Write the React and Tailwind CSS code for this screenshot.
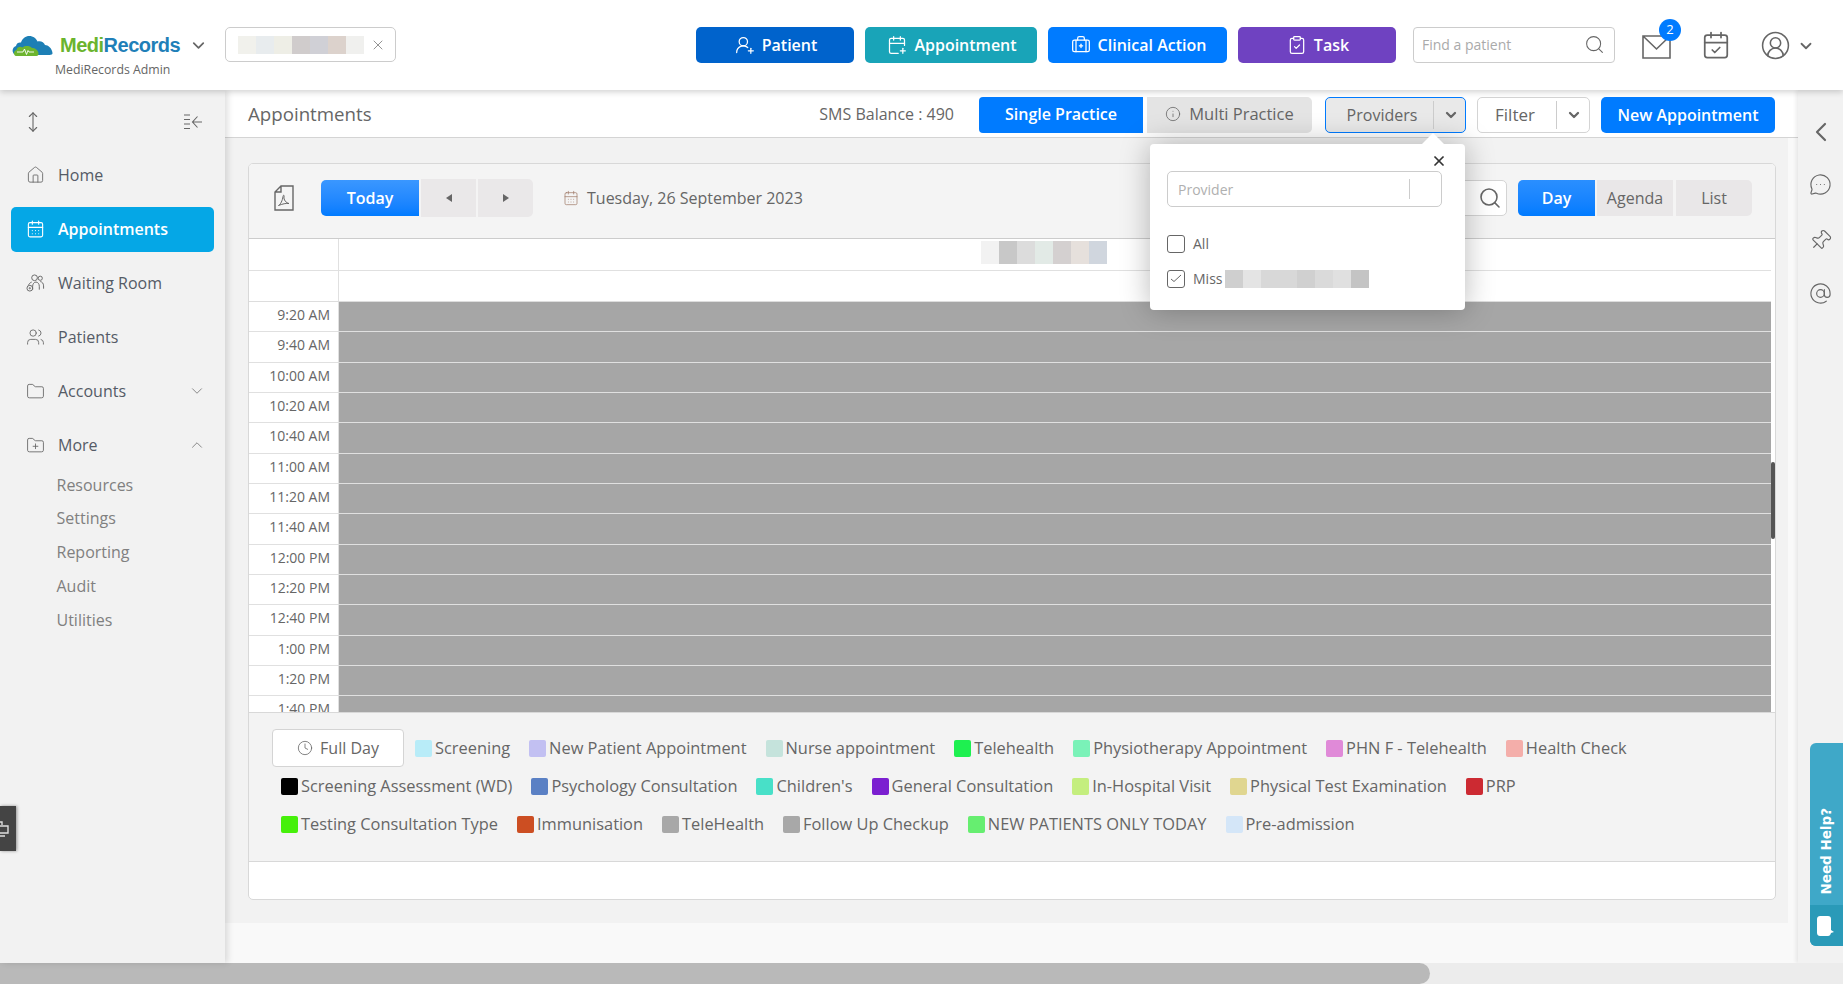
import * as React from "react";
import {
  AtSign, BriefcaseMedical, CalendarCheck, CalendarDays, CalendarPlus, ChevronDown, ChevronLeft, ChevronUp,
  CircleUserRound, ClipboardCheck, Clock, Folder, FolderPlus, Home, Info, MessageCircleMore, MoveVertical,
  Pin, Search, UserRoundPlus, Users, X,
} from "lucide-react";

const legendRows = [
  [
    ["Screening", "bg-[#b8ecf8]"],
    ["New Patient Appointment", "bg-[#c2c0f2]"],
    ["Nurse appointment", "bg-[#c5e3dc]"],
    ["Telehealth", "bg-[#1ef050]"],
    ["Physiotherapy Appointment", "bg-[#7af2b8]"],
    ["PHN F - Telehealth", "bg-[#e08ad8]"],
    ["Health Check", "bg-[#f4aeaa]"],
  ],
  [
    ["Screening Assessment (WD)", "bg-black"],
    ["Psychology Consultation", "bg-[#5a80c4]"],
    ["Children's", "bg-[#48e0c8]"],
    ["General Consultation", "bg-[#7b1fd0]"],
    ["In-Hospital Visit", "bg-[#c4ee7e]"],
    ["Physical Test Examination", "bg-[#e0d690]"],
    ["PRP", "bg-[#cc2a32]"],
  ],
  [
    ["Testing Consultation Type", "bg-[#46f00a]"],
    ["Immunisation", "bg-[#cc4e22]"],
    ["TeleHealth", "bg-[#a8a8a8]"],
    ["Follow Up Checkup", "bg-[#a8a8a8]"],
    ["NEW PATIENTS ONLY TODAY", "bg-[#66ee70]"],
    ["Pre-admission", "bg-[#d4e6f8]"],
  ],
];

const times = [
  "9:20 AM", "9:40 AM", "10:00 AM", "10:20 AM", "10:40 AM", "11:00 AM", "11:20 AM",
  "11:40 AM", "12:00 PM", "12:20 PM", "12:40 PM", "1:00 PM", "1:20 PM", "1:40 PM",
];

// pixelated patches where the original has redacted names
const Blur = ({ cells, className = "" }) => (
  <div className={`flex ${className}`}>
    {cells.map((c, i) => (
      <div key={i} className={`h-full w-[18px] ${c}`} />
    ))}
  </div>
);

const Legend = ({ label, color }) => (
  <div className="flex items-center">
    <span className={`h-[17px] w-[17px] rounded-[2px] ${color}`} />
    <span className="ml-[3px] -translate-y-px text-[16.4px] font-medium leading-[17px] text-[#666]">{label}</span>
  </div>
);

const TopButton = ({ icon: Icon, label, className }) => (
  <button className={`flex h-9 items-center justify-center gap-[7px] rounded-[5px] pl-[2px] text-[16px] font-semibold text-white ${className}`}>
    <Icon size={20} strokeWidth={1.5} />
    {label}
  </button>
);

const NavItem = ({ icon, label, active, chevron }) => (
  <div className={`mx-[11px] flex h-[45px] items-center rounded-[5px] pl-[15px] pr-[8px] ${active ? "bg-[#05a7e6] text-white font-semibold" : "text-[#555b66]"}`}>
    <span className={`mr-[13px] flex w-[19px] justify-center ${active ? "text-white" : "text-[#666]"}`}>{icon}</span>
    <span className="flex-1 text-[16px]">{label}</span>
    {chevron}
  </div>
);

const WaitingIcon = () => (
  <svg width="20" height="20" viewBox="0 0 20 20" fill="none" stroke="currentColor" strokeWidth="1">
    <circle cx="9" cy="4.500" r="3" />
    <circle cx="15" cy="5" r="2.200" />
    <path d="M7 17v-3.500c0-2.500 1.500-4.500 3.500-4.500s3.500 2 3.500 4.500V17M15 8.500c2 .2 3.500 2 3.500 4.500v3" />
    <path d="M2.500 12.500c.8-1.800 2-3 3.500-3.500" />
    <circle cx="4" cy="15.500" r="3" />
    <circle cx="4" cy="15.500" r=".7" />
  </svg>
);

const CollapseIcon = () => (
  <svg width="20" height="18" viewBox="0 0 20 18" fill="none" stroke="currentColor" strokeWidth="1.1">
    <path d="M1 2h6M1 6.500h6M1 11h6M1 15.500h6M19 9H10M14.500 3.500 9.500 9l5 5.500" />
  </svg>
);

const PdfIcon = () => (
  <svg width="20" height="26" viewBox="0 0 20 26" fill="none" stroke="#666" strokeWidth="1.4">
    <path d="M7 1h12v24H1V7zM7 1v6H1" />
    <path d="M4.500 20.500c2-1 4-5 4.500-9 .3-2 1.500-1.500 1 .5-.5 2.500 2 6 5 6.500-2.500-.5-7 .5-10.500 2z" strokeWidth="1" />
  </svg>
);

const MailIcon = () => (
  <svg width="29" height="24" viewBox="0 0 29 24" fill="none" stroke="#666" strokeWidth="1.6">
    <path d="M1 1h27v22H1zM1 1l13.500 13L28 1" />
  </svg>
);

const Logo = () => (
  <svg width="41" height="23" viewBox="0 0 41 23">
    <path d="M2 20c-2.500-2.500-1.500-7 2-8 .5-3 3-4 5-3.500C10.500 4 15 1 20 2.500c3 .8 4.500 3 5.500 5 3-1 6.500.5 7.500 3.500 3 0 7 3 7.500 8 .2 1.500-1 2-3 2H5c-1.500 0-2.300-.6-3-1.500z" fill="#1d7fb5" />
    <path d="M4 22c-2.500-.5-3-5 .5-6 .5-3 4-4 6-2.500 2.500-2 7-2 9.500.5 3 0 6 2 6.500 5 .2 2-.5 3-2 3z" fill="#6db52f" />
    <path d="M5 18h6l1.500-3 2 5.500 1.500-4 1 1.500h5" fill="none" stroke="#fff" strokeWidth=".9" />
  </svg>
);

export default function App() {
  return (
    <div className="relative flex h-[984px] w-[1843px] flex-col overflow-hidden bg-[#f9f9f9] font-['Open_Sans',sans-serif]">
      {/* Top bar */}
      <header className="relative z-20 flex h-[90px] shrink-0 items-center bg-white pl-[12px] shadow-[0_2px_6px_rgba(0,0,0,0.18)]">
        <div className="flex w-[213px] flex-col pt-[21px]">
          <div className="flex items-center">
            <Logo />
            <span className="ml-[7px] font-['Liberation_Sans',sans-serif] text-[20px] font-bold leading-[24px] tracking-[-0.5px] text-[#1f7fb8]">
              <span className="text-[#6ab42d]">Medi</span>Records
            </span>
            <ChevronDown size={19} strokeWidth={2.2} className="ml-[9px] text-[#666]" />
          </div>
          <span className="ml-[43px] mt-[5px] text-[12.3px] leading-[16px] text-[#666]">MediRecords Admin</span>
        </div>

        <div className="-mt-[1px] flex h-[35px] w-[171px] items-center rounded-[5px] border border-[#ccc] pl-[12px]">
          <Blur className="h-[18px]" cells={["bg-[#f1f1ec]", "bg-[#e8ecee]", "bg-[#eeeee6]", "bg-[#d0cccc]", "bg-[#d0d0d6]", "bg-[#dcd2cc]", "bg-[#f0f0ee]"]} />
          <X size={16} strokeWidth={1.2} className="ml-[6px] text-[#777]" />
        </div>

        <div className="-mt-[1px] ml-[300px] flex items-center">
          <TopButton icon={UserRoundPlus} label="Patient" className="w-[158px] bg-[#0063cc]" />
          <TopButton icon={CalendarPlus} label="Appointment" className="ml-[11px] w-[172px] bg-[#19a4b8]" />
          <TopButton icon={BriefcaseMedical} label="Clinical Action" className="ml-[11px] w-[179px] bg-[#007bff]" />
          <TopButton icon={ClipboardCheck} label="Task" className="ml-[11px] w-[158px] bg-[#6f42c1]" />
        </div>

        <div className="-mt-[1px] ml-[17px] flex h-9 w-[202px] items-center rounded-[4px] border border-[#ccc] pl-[8px] pr-[9px]">
          <span className="flex-1 text-[14px] text-[#aaa]">Find a patient</span>
          <Search size={21} strokeWidth={1.2} className="text-[#666]" />
        </div>

        <div className="relative ml-[27px] mt-[3px]">
          <MailIcon />
          <span className="absolute -right-[10px] -top-[16px] flex h-[22px] w-[22px] items-center justify-center rounded-full bg-[#007bff] text-[13px] text-white">2</span>
        </div>
        <CalendarCheck size={30} strokeWidth={1.4} className="ml-[30px] text-[#666]" />
        <CircleUserRound size={31} strokeWidth={1.2} className="ml-[29px] text-[#666]" />
        <ChevronDown size={18} strokeWidth={2.4} className="ml-[6px] mt-[2px] text-[#666]" />
      </header>

      <div className="flex min-h-0 flex-1">
        {/* Sidebar */}
        <aside className="relative z-10 w-[225px] shrink-0 bg-[#f2f2f2] shadow-[3px_0_6px_rgba(0,0,0,0.12)]">
          <div className="flex h-[62.5px] items-center justify-between pl-[22px] pr-[22px] pt-[2px] text-[#666]">
            <MoveVertical size={22} strokeWidth={1.2} />
            <CollapseIcon />
          </div>
          <div className="flex flex-col gap-[9px]">
            <NavItem icon={<Home size={20} strokeWidth={1.1} />} label="Home" />
            <NavItem active icon={<CalendarDays size={20} strokeWidth={1.4} />} label="Appointments" />
            <NavItem icon={<WaitingIcon />} label="Waiting Room" />
            <NavItem icon={<Users size={20} strokeWidth={1.1} />} label="Patients" />
            <NavItem icon={<Folder size={21} strokeWidth={1.1} />} label="Accounts" chevron={<ChevronDown size={18} strokeWidth={1} className="text-[#666]" />} />
            <NavItem icon={<FolderPlus size={21} strokeWidth={1.1} />} label="More" chevron={<ChevronUp size={18} strokeWidth={1} className="text-[#666]" />} />
          </div>
          <div className="mt-[1px] flex flex-col pl-[56.5px] text-[16px] leading-[33.8px] text-[#808080]">
            <span>Resources</span>
            <span>Settings</span>
            <span>Reporting</span>
            <span>Audit</span>
            <span>Utilities</span>
          </div>
        </aside>

        {/* Main */}
        <main className="flex min-w-0 flex-1 flex-col">
          <div className="flex h-[48px] shrink-0 items-center border-b border-[#d4d4d4] bg-white pl-[23px] pr-[23px] pt-[3px]">
            <span className="flex-1 pb-[2px] text-[18.7px] font-medium text-[#666]">Appointments</span>
            <span className="mr-[25px] pb-[2px] text-[16px] text-[#666]">SMS Balance : 490</span>
            <button className="h-9 w-[164px] rounded-l-[4px] bg-[#007bff] pb-[2px] text-[16px] font-semibold text-white">Single Practice</button>
            <button className="ml-[4px] flex h-9 w-[165px] items-center justify-center gap-2 rounded-r-[5px] bg-[#e4e4e4] pb-[2px] text-[16.5px] font-medium text-[#666]">
              <Info size={16} strokeWidth={1.2} />
              Multi Practice
            </button>
            <div className="ml-[13px] flex h-9 w-[141px] items-center rounded-[5px] border border-[#007bff] bg-[#e9e9e9] text-[16px] font-medium text-[#666]">
              <span className="w-[107px] pl-[5px] text-center">Providers</span>
              <span className="h-[28px] w-px bg-[#ccc]" />
              <ChevronDown size={16} strokeWidth={3.4} className="ml-[9px]" />
            </div>
            <div className="ml-[11px] flex h-9 w-[113px] items-center rounded-[5px] border border-[#d4d4d4] bg-white text-[17px] font-medium text-[#666]">
              <span className="w-[78px] pr-[4px] text-center">Filter</span>
              <span className="h-[28px] w-px bg-[#ccc]" />
              <ChevronDown size={16} strokeWidth={3.4} className="ml-[9px]" />
            </div>
            <button className="ml-[11px] h-9 w-[174px] rounded-[5px] bg-[#007bff] text-[16px] font-semibold text-white">New Appointment</button>
          </div>

          <div className="mr-[10px] h-[785px] shrink-0 bg-[#f2f2f2] pl-[23px] pr-[12px] pt-[25px]">
            <div className="flex h-[737px] flex-col overflow-hidden rounded-[5px] border border-[#d8d8d8] bg-white">
              {/* Calendar toolbar */}
              <div className="flex h-[75px] shrink-0 items-center border-b border-[#ccc] bg-[#f4f4f4] pb-[6px] pl-[25px] pr-[23px]">
                <PdfIcon />
                <button className="ml-[27px] h-9 w-[98px] rounded-l-[5px] bg-gradient-to-b from-[#3a97ff] to-[#007bff] text-[16px] font-semibold text-white">Today</button>
                <div className="ml-[2px] flex h-[38px] w-[55px] items-center justify-center bg-[#eae8e9]">
                  <span className="h-0 w-0 border-y-[4px] border-r-[6px] border-y-transparent border-r-[#666]" />
                </div>
                <div className="ml-[2px] flex h-[38px] w-[55px] items-center justify-center rounded-r-[5px] bg-[#eae8e9]">
                  <span className="h-0 w-0 border-y-[4px] border-l-[6px] border-y-transparent border-l-[#666]" />
                </div>
                <CalendarDays size={16} strokeWidth={1.1} className="ml-[30px] text-[#a07c6a]" />
                <span className="ml-[8px] flex-1 text-[16px] text-[#666]">Tuesday, 26 September 2023</span>
                <div className="flex h-9 w-[220px] items-center justify-end rounded-[5px] border border-[#d4d4d4] bg-white pr-[4px]">
                  <Search size={24} strokeWidth={1.6} className="text-[#666]" />
                </div>
                <button className="ml-[11px] h-9 w-[77px] rounded-l-[5px] bg-gradient-to-b from-[#2a8fff] to-[#007bff] text-[16px] font-semibold text-white">Day</button>
                <button className="ml-[2px] h-9 w-[76px] bg-[#e9e7e8] text-[16px] font-medium text-[#666]">Agenda</button>
                <button className="ml-[3px] h-9 w-[76px] rounded-r-[5px] bg-[#e9e7e8] text-[16px] font-medium text-[#666]">List</button>
              </div>

              {/* Day grid */}
              <div className="relative h-[473px] shrink-0 overflow-hidden pr-[4px]">
                <div className="flex h-[32px] border-b border-[#e0e0e0]">
                  <div className="w-[90px] border-r border-[#e0e0e0]" />
                  <div className="flex flex-1 justify-center pt-[2px]">
                    <Blur className="mr-[22px] h-[23px]" cells={["bg-[#f2f2f2]", "bg-[#c8c8c8]", "bg-[#dcdcdc]", "bg-[#e2eae6]", "bg-[#d4d0d0]", "bg-[#e6e0dc]", "bg-[#d0d6de]"]} />
                  </div>
                </div>
                <div className="flex h-[31px] border-b border-[#ddd]">
                  <div className="w-[90px] border-r border-[#e0e0e0]" />
                </div>
                {times.map((t) => (
                  <div key={t} className="flex h-[30.33px] border-b border-[#e0e0e0]">
                    <div className="w-[90px] shrink-0 border-r border-[#e0e0e0] pr-[8px] pt-[3px] text-right text-[14px] leading-[20px] text-[#666]">{t}</div>
                    <div className="flex-1 bg-[#a6a6a6]" />
                  </div>
                ))}
                <div className="absolute right-0 top-[223px] h-[77px] w-[4px] rounded-full bg-[#555]" />
              </div>

              {/* Legend */}
              <div className="h-[150px] shrink-0 border-y border-[#d8d8d8] bg-[#f3f3f3] pl-[23px] pr-[22px] pt-[16px]">
                <div className="flex h-[38px] items-center">
                  <button className="mr-[11px] flex h-[38px] w-[132px] items-center justify-center gap-[7px] rounded-[4px] border border-[#d4d4d4] bg-white text-[16px] font-medium text-[#666]">
                    <Clock size={16} strokeWidth={1.2} />
                    Full Day
                  </button>
                  <div className="flex gap-[19px]">
                    {legendRows[0].map(([l, c]) => <Legend key={l} label={l} color={c} />)}
                  </div>
                </div>
                <div className="mt-[11px] flex gap-[19px] pl-[9px]">
                  {legendRows[1].map(([l, c]) => <Legend key={l} label={l} color={c} />)}
                </div>
                <div className="mt-[21px] flex gap-[19px] pl-[9px]">
                  {legendRows[2].map(([l, c]) => <Legend key={l} label={l} color={c} />)}
                </div>
              </div>
            </div>
          </div>
        </main>

        {/* Right rail */}
        <aside className="flex w-[45px] shrink-0 flex-col items-center bg-[#f2f2f2] pt-[26px] text-[#666] shadow-[-2px_0_4px_rgba(0,0,0,0.08)]">
          <ChevronLeft size={32} strokeWidth={1.6} />
          <MessageCircleMore size={23} strokeWidth={1.2} className="mt-[25px]" />
          <Pin size={23} strokeWidth={1.2} className="mt-[33px] rotate-45" />
          <AtSign size={23} strokeWidth={1.2} className="mt-[30px]" />
        </aside>
      </div>

      {/* Bottom scrollbar */}
      <div className="h-[21px] shrink-0 bg-[#ececec]">
        <div className="h-full w-[1430px] rounded-r-full bg-[#b9b9b9]" />
      </div>

      {/* Providers popover */}
      <div className="absolute left-[1150px] top-[144px] z-30 h-[166px] w-[315px] rounded-[4px] bg-white pl-[17px] shadow-[0_0_30px_rgba(0,0,0,0.28)]">
        <span className="absolute -top-[11px] left-[272px] h-0 w-0 border-x-[11px] border-b-[11px] border-x-transparent border-b-white" />
        <X size={16} strokeWidth={2.6} className="absolute right-[18px] top-[9px] text-[#333]" />
        <div className="mt-[27px] flex h-9 w-[275px] items-center rounded-[5px] border border-[#ccc] pl-[10px]">
          <span className="flex-1 text-[14px] text-[#b0b0b0]">Provider</span>
          <span className="mr-[31px] h-[20px] w-px bg-[#ccc]" />
        </div>
        <div className="mt-[26px] flex items-center">
          <span className="h-[18px] w-[18px] rounded-[3px] border border-[#666]" />
          <span className="ml-[8px] text-[14px] font-medium text-[#666]">All</span>
        </div>
        <div className="mt-[14px] flex items-center">
          <span className="flex h-[18px] w-[18px] items-center justify-center rounded-[3px] border border-[#666]">
            <svg width="12" height="9" viewBox="0 0 12 9" fill="none" stroke="#666" strokeWidth="1"><path d="M1 5l3 2.500L11 1" /></svg>
          </span>
          <span className="ml-[8px] text-[14px] font-medium text-[#666]">Miss</span>
          <Blur className="ml-[3px] h-[18px]" cells={["bg-[#cfcfcf]", "bg-[#e4e4e4]", "bg-[#d8d8d8]", "bg-[#d8d8d8]", "bg-[#d0d0d0]", "bg-[#dadada]", "bg-[#e0e0e0]", "bg-[#c4c4c4]"]} />
        </div>
      </div>

      {/* Left floating tab */}
      <div className="absolute left-0 top-[806px] z-30 flex h-[45px] w-[16px] items-center justify-end overflow-hidden bg-[#444] pr-[6px] shadow-[1px_0_3px_rgba(0,0,0,0.4)]">
        <svg width="12" height="16" viewBox="0 0 12 16" fill="none" stroke="#ddd" strokeWidth="1.4" className="shrink-0">
          <path d="M0 1h4v3M0 5h10v7H0M0 15h7" />
        </svg>
      </div>

      {/* Need help tab */}
      <div className="absolute left-[1810px] top-[743px] z-30 flex h-[203px] w-[33px] flex-col overflow-hidden rounded-l-[6px] bg-[#3fa8c8]">
        <div className="flex h-[162px] items-end justify-center pb-[10px]">
          <span className="rotate-180 font-['DejaVu_Sans',sans-serif] text-[13.5px] font-bold leading-none text-white [writing-mode:vertical-rl]">Need Help?</span>
        </div>
        <div className="flex flex-1 items-center justify-center bg-[#2a9ab8]">
          <svg width="18" height="22" viewBox="0 0 18 22" fill="#fff" className="-ml-[2px]"><path d="M3 1h8c2 0 3 1 3 3v11l3 2-3 1c-.5 2-1.500 3-3 3H3c-1.500 0-3-1-3-3V4c0-2 1.500-3 3-3z" /></svg>
        </div>
      </div>
    </div>
  );
}
